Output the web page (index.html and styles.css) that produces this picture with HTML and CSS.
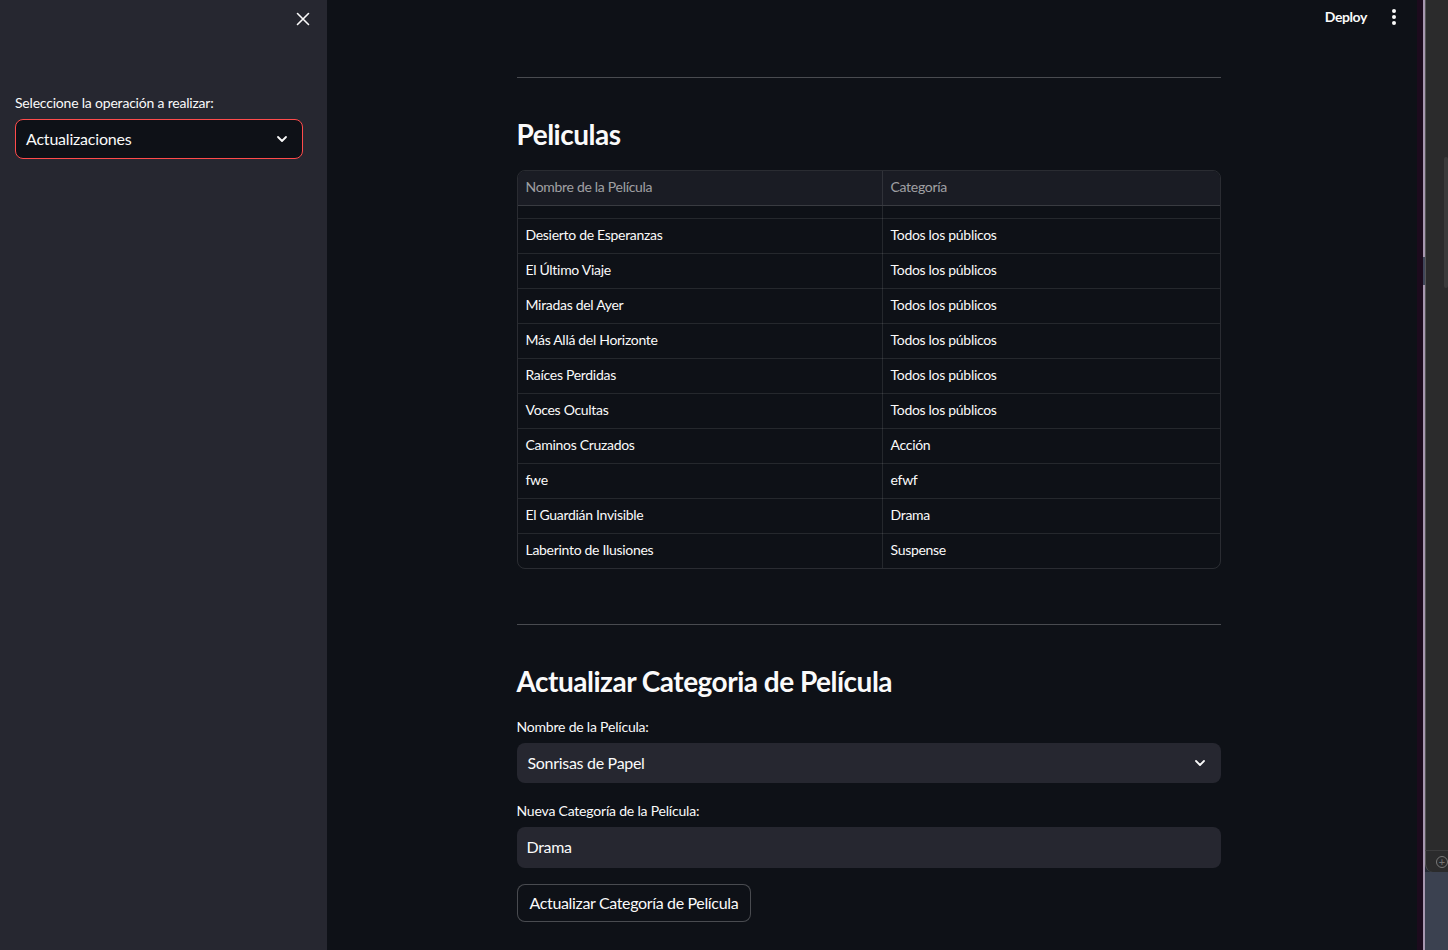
FILE: index.html
```html
<!DOCTYPE html>
<html lang="es">
<head>
<meta charset="utf-8">
<title>Peliculas</title>
<link rel="stylesheet" href="styles.css">
</head>
<body>
<div class="app">
  <aside class="sidebar">
    <div class="sidebar-top">
      <button class="close-btn" aria-label="Cerrar">
        <svg width="14" height="14" viewBox="0 0 14 14"><path d="M1.5 1.5 L12.5 12.5 M12.5 1.5 L1.5 12.5" stroke="#fafafa" stroke-width="1.6" stroke-linecap="round"/></svg>
      </button>
    </div>
    <div class="field">
      <label class="label">Seleccione la operación a realizar:</label>
      <div class="select select-side">
        <span>Actualizaciones</span>
        <svg class="chev" width="12" height="8" viewBox="0 0 12 8"><path d="M2 2 L6 6 L10 2" fill="none" stroke="#fafafa" stroke-width="1.8" stroke-linecap="round" stroke-linejoin="round"/></svg>
      </div>
    </div>
  </aside>

  <main class="main">
    <header class="topbar">
      <span class="deploy">Deploy</span>
      <span class="kebab"><i></i><i></i><i></i></span>
    </header>
    <div class="content">
      <hr class="divider">
      <h2 class="title">Peliculas</h2>
      <div class="table">
        <div class="thead">
          <div class="cell c1">Nombre de la Película</div>
          <div class="cell c2">Categoría</div>
        </div>
        <div class="tbody">
          <div class="rows">
            <div class="row"><div class="cell c1">Sonrisas de Papel</div><div class="cell c2">Comedia</div></div>
            <div class="row"><div class="cell c1">Desierto de Esperanzas</div><div class="cell c2">Todos los públicos</div></div>
            <div class="row"><div class="cell c1">El Último Viaje</div><div class="cell c2">Todos los públicos</div></div>
            <div class="row"><div class="cell c1">Miradas del Ayer</div><div class="cell c2">Todos los públicos</div></div>
            <div class="row"><div class="cell c1">Más Allá del Horizonte</div><div class="cell c2">Todos los públicos</div></div>
            <div class="row"><div class="cell c1">Raíces Perdidas</div><div class="cell c2">Todos los públicos</div></div>
            <div class="row"><div class="cell c1">Voces Ocultas</div><div class="cell c2">Todos los públicos</div></div>
            <div class="row"><div class="cell c1">Caminos Cruzados</div><div class="cell c2">Acción</div></div>
            <div class="row"><div class="cell c1">fwe</div><div class="cell c2">efwf</div></div>
            <div class="row"><div class="cell c1">El Guardián Invisible</div><div class="cell c2">Drama</div></div>
            <div class="row last"><div class="cell c1">Laberinto de Ilusiones</div><div class="cell c2">Suspense</div></div>
          </div>
        </div>
      </div>
      <hr class="divider divider2">
      <h2 class="title title2">Actualizar Categoria de Película</h2>
      <div class="field form-field">
        <label class="label">Nombre de la Película:</label>
        <div class="select select-main">
          <span>Sonrisas de Papel</span>
          <svg class="chev" width="12" height="8" viewBox="0 0 12 8"><path d="M2 2 L6 6 L10 2" fill="none" stroke="#fafafa" stroke-width="1.8" stroke-linecap="round" stroke-linejoin="round"/></svg>
        </div>
      </div>
      <div class="field form-field">
        <label class="label">Nueva Categoría de la Película:</label>
        <div class="input">Drama</div>
      </div>
      <button class="btn">Actualizar Categoría de Película</button>
    </div>
  </main>

  <div class="desk">
    <div class="desk-purple"></div>
    <div class="desk-wall"></div>
    <div class="desk-win">
      <div class="win-body"><div class="win-scroll"></div></div>
      <div class="win-foot"><span class="plus">+</span></div>
      <div class="desk-bottom"></div>
    </div>
  </div>
</div>
</body>
</html>
```
FILE: styles.css
```css
* { box-sizing: border-box; }
html, body { margin: 0; padding: 0; }
body {
  width: 1448px;
  height: 950px;
  overflow: hidden;
  background: #0e1117;
  color: #fafafa;
  font-family: "Lato", "Noto Sans", sans-serif;
  font-size: 14px;
}
.app { display: flex; height: 950px; }

.sidebar {
  width: 327px;
  flex: none;
  background: #262730;
  padding: 0 24px 0 15px;
}
.sidebar-top {
  display: flex;
  justify-content: flex-end;
  height: 93px;
  padding-top: 12px;
}
.close-btn {
  background: none;
  border: 0;
  padding: 0;
  width: 14px;
  height: 14px;
  margin-right: -7px;
  display: flex;
}
.field { display: flex; flex-direction: column; }
.label {
  font-size: 14px;
  line-height: 20px;
  color: #fafafa;
  margin-bottom: 6px;
  letter-spacing: -0.2px;
}
.select {
  display: flex;
  align-items: center;
  justify-content: space-between;
  height: 40px;
  border-radius: 8px;
  font-size: 16px;
}
.select-side {
  background: #0e1117;
  border: 1px solid #ff4b4b;
  padding: 0 14px 1px 10px;
  letter-spacing: -0.2px;
}
.select-main {
  background: #262730;
  padding: 0 15px 2px 11px;
  letter-spacing: -0.3px;
}
.select-main .chev { margin-top: 2px; }
.chev { display: block; }

.main {
  flex: 1;
  display: flex;
  flex-direction: column;
  align-items: center;
  padding-right: 7px;
  position: relative;
}
.topbar {
  position: absolute;
  top: 0;
  right: 0;
  height: 33px;
  display: flex;
  align-items: center;
  gap: 25px;
  padding-right: 21px;
}
.deploy { font-size: 14px; font-weight: 700; letter-spacing: -0.4px; }
.kebab { display: flex; flex-direction: column; gap: 2px; }
.kebab i { display: block; width: 4px; height: 4px; border-radius: 50%; background: #fafafa; }

.content {
  width: 704px;
  padding-top: 77px;
}
.divider {
  border: 0;
  border-top: 1px solid rgba(250,250,250,0.25);
  margin: 0;
}
.title {
  margin: 0;
  font-size: 28px;
  font-weight: 700;
  line-height: 40px;
  padding: 36px 0 0;
  height: 92px;
  letter-spacing: -0.5px;
}

.table {
  border: 1px solid rgba(250,250,250,0.12);
  border-radius: 8px;
  overflow: hidden;
}
.thead {
  display: flex;
  height: 35px;
  background: #1a1c24;
  border-bottom: 1px solid rgba(250,250,250,0.14);
  color: rgba(250,250,250,0.6);
}
.cell {
  display: flex;
  align-items: center;
  padding: 0 8px 3px;
  letter-spacing: -0.3px;
}
.row .cell { padding-bottom: 5px; }
.c1 { width: 365px; border-right: 1px solid rgba(250,250,250,0.1); }
.c2 { flex: 1; }
.tbody { height: 362px; overflow: hidden; }
.rows { margin-top: -22px; }
.row {
  display: flex;
  height: 35px;
  border-bottom: 1px solid rgba(250,250,250,0.1);
}
.row.last { border-bottom: 0; }
.row .cell { height: 35px; }
.row:first-child .cell { padding-bottom: 7px; }

.divider2 { margin-top: 55px; }
.title2 { height: 92px; padding-top: 36px; }
.form-field { margin-bottom: 18px; }
.form-field .label { margin-bottom: 6px; }
.input {
  height: 41px;
  background: #262730;
  border-radius: 8px;
  display: flex;
  align-items: center;
  padding: 0 10px 2px;
  font-size: 16px;
  letter-spacing: -0.3px;
}
.btn {
  margin-top: -2px;
  align-self: flex-start;
  height: 38px;
  padding: 0 12px 2px;
  background: #0e1117;
  color: #fafafa;
  border: 1px solid rgba(250,250,250,0.25);
  border-radius: 8px;
  font-family: inherit;
  font-size: 16px;
  letter-spacing: -0.35px;
}

.desk { width: 31px; flex: none; display: flex; height: 950px; }
.desk-purple { width: 9px; background: #1c0b1d; }
.desk-wall { width: 3px; background: linear-gradient(#a797b0 0 27%, #40465a 27% 30%, #a797b0 30% 100%); }
.desk-win { flex: 1; display: flex; flex-direction: column; background: #262b35; }
.win-body { flex: 1; background: #2b2b2c; border-left: 1px solid #555; position: relative; }
.win-scroll { position: absolute; right: 0; top: 157px; width: 4px; height: 131px; background: #3a3a3b; border-radius: 2px; }
.win-foot { height: 22px; background: #2b2b2c; border-left: 1px solid #555; border-top: 1px solid #3c3c3d; border-bottom-left-radius: 8px; display: flex; align-items: center; padding-left: 10px; }
.plus { font-size: 11px; color: #777; border: 1px solid #777; border-radius: 50%; width: 12px; height: 12px; display: flex; align-items: center; justify-content: center; line-height: 1; }
.desk-bottom { height: 78px; background: #3b4150; }
```
